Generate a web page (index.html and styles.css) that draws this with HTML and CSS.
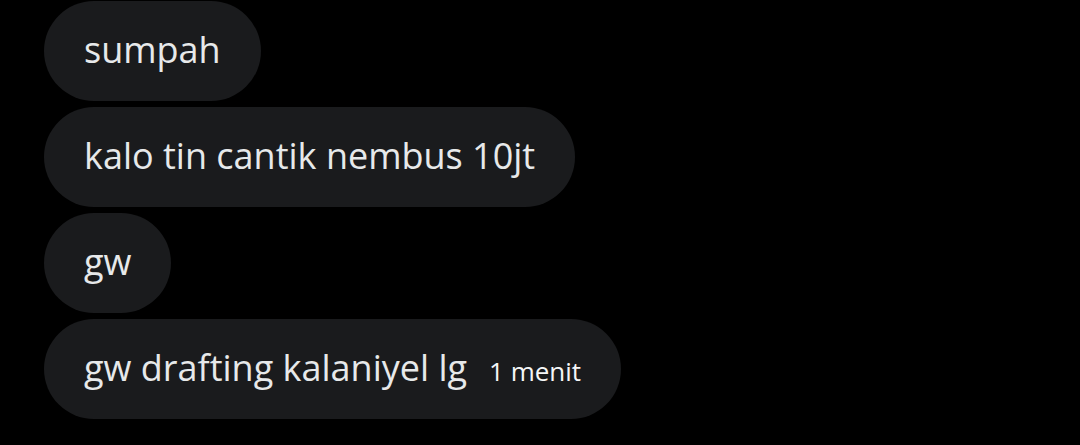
FILE: index.html
```html
<!DOCTYPE html>
<html lang="id">
<head>
<meta charset="UTF-8" />
<meta name="viewport" content="width=device-width, initial-scale=1" />
<title>Pesan</title>
<link rel="stylesheet" href="styles.css">
</head>
<body>

  <!-- Thread of received messages -->
  <div class="thread">
    <div class="bubble">sumpah</div>
    <div class="bubble">kalo tin cantik nembus 10jt</div>
    <div class="bubble">gw</div>
    <div class="bubble">
      <span>gw drafting kalaniyel lg</span>
      <span class="time">1 menit</span>
    </div>
  </div>

</body>
</html>
```
FILE: styles.css
```css
body {
  margin: 0;
  background: #000;
  font-family: 'Open Sans', 'DejaVu Sans', sans-serif;
  color: #e7e9ea;
}
.thread {
  display: flex;
  flex-direction: column;
  align-items: flex-start;
  gap: 6px;
  padding: 1px 0 0 44px;
}
.bubble {
  display: flex;
  align-items: baseline;
  height: 100px;
  box-sizing: border-box;
  padding: 0 40px;
  line-height: 98px;
  border-radius: 50px;
  background: #1a1b1d;
  font-size: 36px;
  white-space: nowrap;
}
.bubble .time {
  margin-left: 22px;
  font-size: 26px;
  color: #f5f6f7;
}
```
